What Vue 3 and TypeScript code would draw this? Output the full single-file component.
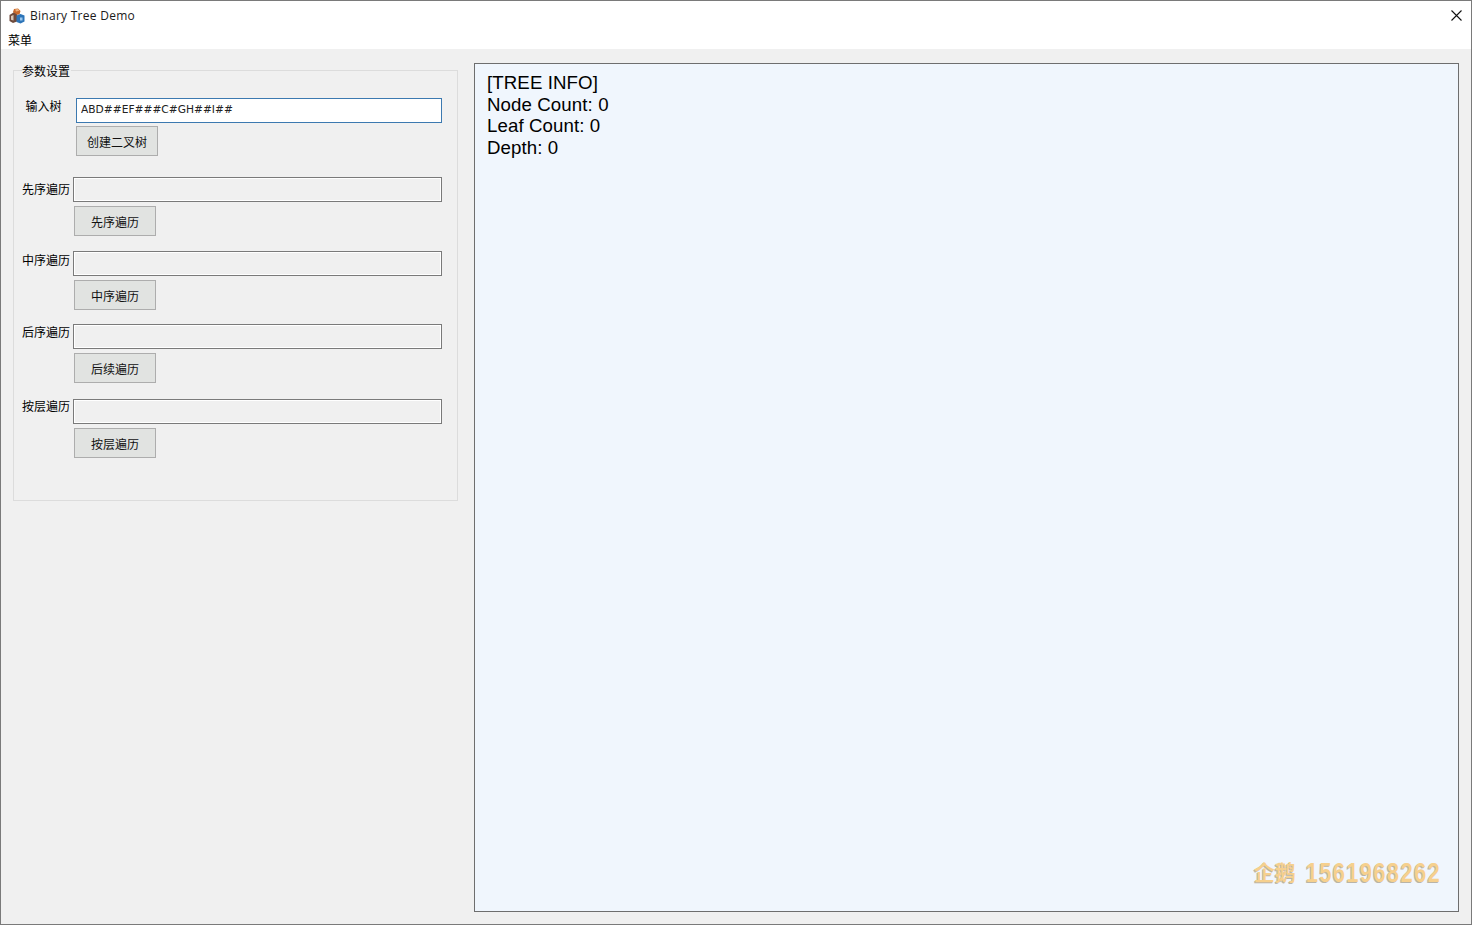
<script setup lang="ts">
interface Row {
  label: string
  button: string
  gap: number
  labelTop: number
}
const rows: Row[] = [
  { label: '先序遍历', button: '先序遍历', gap: 21, labelTop: 4 },
  { label: '中序遍历', button: '中序遍历', gap: 15, labelTop: 1 },
  { label: '后序遍历', button: '后续遍历', gap: 14, labelTop: 0 },
  { label: '按层遍历', button: '按层遍历', gap: 16, labelTop: -1 },
]
const info: string[] = ['[TREE INFO]', 'Node Count: 0', 'Leaf Count: 0', 'Depth: 0']
</script>

<template>
  <div class="window">
    <header class="titlebar">
      <svg class="app-icon" viewBox="0 0 16 16" width="16" height="16" aria-hidden="true">
        <path d="M5 1 9 .5l2.500 2.500-1 3.500-4.500.5L4 4z" fill="#c8692c" />
        <path d="M6 1.500l3-.5 1.200 1.700-3 .8z" fill="#eeb27e" />
        <path d="M.5 7l4-2.500 3.500 2v7l-4 1.500-3.500-2z" fill="#6e4a3c" />
        <path d="M2 8l2.500-1v5.500l-2.500-.8z" fill="#d9c8b8" />
        <path d="M7.500 7.500l4-1.500 4 1.500v6l-4 2-4-1.500z" fill="#2c74b8" />
        <path d="M11 9.500h2.500v3H11z" fill="#9cc8ee" />
      </svg>
      <span class="title">Binary Tree Demo</span>
      <svg class="close" viewBox="0 0 11 11" width="11" height="11" aria-hidden="true">
        <path d="M.5.500l10 10M10.500.500l-10 10" stroke="#111" stroke-width="1.100" fill="none" />
      </svg>
    </header>
    <nav class="menubar"><span>菜单</span></nav>

    <main class="content">
      <fieldset class="group">
        <legend>参数设置</legend>
        <div class="first-row">
          <label class="first-label">输入树</label>
          <div class="first-fields">
            <input class="active-input" value="ABD##EF###C#GH##I##" />
            <button class="first-btn">创建二叉树</button>
          </div>
        </div>
        <div v-for="row in rows" :key="row.label" class="row" :style="{ marginTop: row.gap + 'px' }">
          <label class="row-label" :style="{ marginTop: row.labelTop + 'px' }">{{ row.label }}</label>
          <div class="fields">
            <input class="plain-input" />
            <button class="btn">{{ row.button }}</button>
          </div>
        </div>
      </fieldset>

      <section class="panel">
        <div v-for="line in info" :key="line" class="info-line">{{ line }}</div>
        <div class="watermark">企鹅 <span class="wm-digits">1561968262</span></div>
      </section>
    </main>
  </div>
</template>

<style>
html, body { margin: 0; padding: 0; overflow: hidden; }
</style>

<style scoped>
.window {
  width: 1472px;
  height: 925px;
  box-sizing: border-box;
  border: 1px solid #7a7a7a;
  background: #f0f0f0;
  display: flex;
  flex-direction: column;
  font-family: "Noto Sans CJK SC", "Liberation Sans", sans-serif;
  font-size: 12px;
  color: #000;
}
.titlebar {
  height: 29px;
  background: #fff;
  display: flex;
  align-items: center;
  padding: 0 9px 0 8px;
  flex: none;
}
.app-icon { flex: none; }
.title {
  margin-left: 5px;
  font-family: "Open Sans", "Noto Sans", sans-serif;
  font-size: 12px;
  letter-spacing: 0.27px;
  color: #1a1a1a;
}
.close { margin-left: auto; }
.menubar {
  height: 19px;
  background: #fff;
  flex: none;
  padding-left: 7px;
  line-height: 19px;
}
.content {
  flex: 1;
  min-height: 0;
  display: flex;
  align-items: flex-start;
  padding: 14px 12px 12px 12px;
}
.group {
  box-sizing: border-box;
  width: 445px;
  height: 438px;
  margin: 0;
  padding: 0 15px 0 8px;
  border: 1px solid #dcdcdc;
  flex: none;
}
legend {
  padding: 0 1px 0 0;
  font-size: 12px;
  line-height: 16px;
  height: 14px;
}
.first-row {
  display: flex;
  margin-top: 21px;
}
.first-label {
  width: 54px;
  padding-left: 3.500px;
  box-sizing: border-box;
  line-height: 16px;
  flex: none;
}
.first-fields, .fields {
  display: flex;
  flex-direction: column;
  flex: 1;
  align-items: flex-start;
}
input {
  box-sizing: border-box;
  height: 25px;
  width: 100%;
  margin: 0;
  outline: none;
}
.active-input {
  border: 1px solid #3c79b0;
  background: #fff;
  padding: 0 0 3px 4px;
  font-family: "DejaVu Sans", sans-serif;
  font-size: 10.67px;
  color: #222;
}
.plain-input {
  border: 1px solid #7a7a7a;
  background: #f0f0f0;
  box-shadow: inset 1px 1px 0 #fff, inset -1px -1px 0 #fff;
  padding: 0;
}
button {
  box-sizing: border-box;
  width: 82px;
  height: 30px;
  border: 1px solid #adadad;
  background: #e1e3e1;
  font-family: "Noto Sans CJK SC", sans-serif;
  font-size: 12px;
  color: #111;
  padding: 0;
}
.first-btn { margin-top: 3px; }
.row { display: flex; }
.row-label {
  width: 51px;
  flex: none;
  line-height: 16px;
  white-space: nowrap;
}
.btn { margin-top: 4px; margin-left: 1px; }
.panel {
  box-sizing: border-box;
  position: relative;
  margin-left: 16px;
  width: 985px;
  height: 849px;
  border: 1px solid #6e6e6e;
  background: #f0f6fd;
  padding: 8px 12px;
  font-family: "Liberation Sans", Arial, sans-serif;
  font-size: 18.67px;
  letter-spacing: 0.1px;
  color: #000;
}
.info-line { line-height: 21.67px; white-space: nowrap; }
.watermark {
  position: absolute;
  right: 17px;
  bottom: 25px;
  font-family: "Noto Sans CJK SC", sans-serif;
  font-weight: 700;
  font-size: 21px;
  line-height: 26px;
  letter-spacing: 0;
  color: #f6d08e;
  text-shadow: -1px 1px 0 #b9b4a8;
  white-space: nowrap;
}
.wm-digits {
  display: inline-block;
  font-family: "Liberation Sans", sans-serif;
  font-size: 22px;
  letter-spacing: 1.3px;
  margin-left: 5px;
  transform: scaleY(1.22);
}
</style>
